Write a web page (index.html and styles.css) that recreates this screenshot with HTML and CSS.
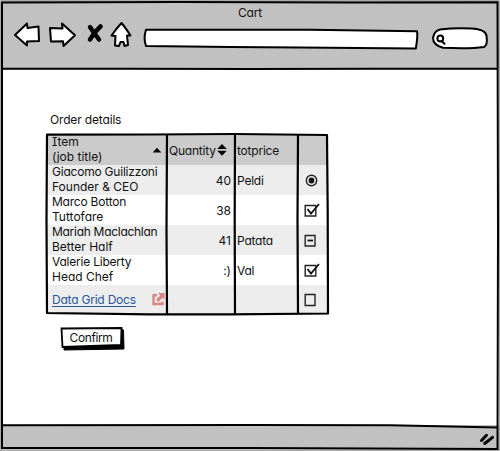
FILE: index.html
```html
<!DOCTYPE html>
<html lang="en">
<head>
<meta charset="utf-8">
<title>Cart</title>
<link rel="stylesheet" href="styles.css">
</head>
<body>
<div class="window">
  <header class="chrome">
    <div class="title">Cart</div>
    <div class="toolbar">
      <svg class="icon" width="30" height="32" viewBox="12 20 30 32"><path d="M15 35L27 23.5L27.5 28L38.5 26.5L39 41L27 41.5L27 45.5Z"/></svg>
      <svg class="icon" width="32" height="32" viewBox="46 20 32 32"><path d="M50 28L62.5 28.5L62 23.5L75 35.2L63.5 46L63 41.2L51 41.5Z"/></svg>
      <svg class="icon" width="20" height="32" viewBox="85 20 20 32"><path class="heavy" d="M90 27Q94 33 99 39.500M100.500 26.500Q94 32 90 39.500"/></svg>
      <svg class="icon" width="28" height="32" viewBox="108 20 28 32"><path d="M121.500 23Q125 27 130.500 35.500L127 35.500L128 45L124.500 46L123.500 42L120.500 42L119 46L115 45.500L115.500 36L111.500 35.500Q116 29 121.500 23Z"/></svg>
      <svg class="icon" width="282" height="32" viewBox="140 20 282 32"><path d="M146 29.800L310 29.800L417 31.300Q418 36 415.800 48.500L300 47.500L230 47L146 46Q143.200 38 146 29.800Z"/></svg>
      <svg class="icon" width="62" height="32" viewBox="430 20 62 32"><path d="M440 29.500Q455 27.500 472 28.500Q486 29.500 486.500 36Q488 45 484 47Q470 49 443 47.800Q433 45 433 38Q434 31 440 29.500Z"/><circle cx="440.300" cy="38.500" r="2.900"/><path d="M441.500 41L444.500 43.800"/></svg>
    </div>
  </header>
  <main class="content">
    <div class="caption">Order details</div>
    <div class="table">
      <div class="row head">
        <div class="item"><span>Item<br>(job title)</span><svg width="8" height="6" viewBox="0 0 8 6"><path d="M-.3 5.500L4 .7L8.300 5.500Z"/></svg></div>
        <div class="sortable"><span class="snug">Quantity</span><svg width="10" height="12" viewBox="0 0 10 12"><path d="M.2 5L5 0L9.800 5ZM.2 6.800L5 11.800L9.800 6.800Z"/></svg></div>
        <div class="snug">totprice</div><div></div>
      </div>
      <div class="row">
        <div class="item"><span><b class="snug">Giacomo Guilizzoni</b><br>Founder &amp; CEO</span></div>
        <div class="num">40</div><div class="snug">Peldi</div>
        <div class="mark"><svg width="18" height="16" viewBox="0 0 18 16"><circle cx="6.500" cy="8.500" r="5.200"/><circle class="dot" cx="6.500" cy="8.500" r="2.900"/></svg></div>
      </div>
      <div class="row">
        <div class="item"><span><b class="snug">Marco Botton</b><br>Tuttofare</span></div>
        <div class="num">38</div><div></div>
        <div class="mark"><svg width="18" height="16" viewBox="0 0 18 16"><path d="M.2 3.500H10.800V14H.2Z"/><path class="tick" d="M2.500 7L6 11.500L14 2"/></svg></div>
      </div>
      <div class="row">
        <div class="item"><span><b class="tight">Mariah Maclachlan</b><br>Better Half</span></div>
        <div class="num">41</div><div class="snug">Patata</div>
        <div class="mark"><svg width="18" height="16" viewBox="0 0 18 16"><path d="M.2 3.500H10V14H.2Z"/><path class="tick" d="M2.500 8.500H8"/></svg></div>
      </div>
      <div class="row">
        <div class="item"><span><b class="snug">Valerie Liberty</b><br>Head Chef</span></div>
        <div class="num">:)</div><div class="snug">Val</div>
        <div class="mark"><svg width="18" height="16" viewBox="0 0 18 16"><path d="M.2 3.500H10.800V14H.2Z"/><path class="tick" d="M2.500 7L6 11.500L14 2"/></svg></div>
      </div>
      <div class="row">
        <div class="item last"><span class="link snug">Data Grid Docs</span><svg class="ext" width="13" height="13" viewBox="0 0 13 13"><path d="M5 2.200H1.500V11H10.500V8.500"/><path class="fill" d="M6 0H12.500V7L10.500 4.700L6.500 9L4 6.500L8.300 2.500Z"/></svg></div>
        <div></div><div></div>
        <div class="mark"><svg width="18" height="16" viewBox="0 0 18 16"><path d="M.2 2.500H10V13.500H.2Z"/></svg></div>
      </div>
      <svg class="rules" width="288" height="186" viewBox="44 132 288 186"><path d="M47 134.700L150 134.500L235 134L327 135L327.700 210L328 313.500L230 314.300L150 314.300L47 313L46.500 220Z"/><path d="M167 135L166.500 230L167 314M235 134L234.700 220L235 314M298 135L297.500 220L298 314"/></svg>
    </div>
    <button class="confirm"><svg class="face" width="68" height="28" viewBox="58 324 68 28"><path class="shade" d="M64 346L121 344L121 329L123.500 330L124 349L64 350Z"/><path class="paper" d="M61.500 328.500L121.500 328L121 345L62.500 347Z"/></svg><span>Confirm</span></button>
  </main>
  <footer class="status"><svg width="20" height="16" viewBox="478 431 20 16"><path d="M481.500 440.500L486.500 435.300M484.700 443.500L492.500 437.300"/></svg></footer>
  <svg class="frame" width="500" height="451" viewBox="0 0 500 451"><path class="edge" d="M0 0H500V2H0ZM0 0V451H1V0ZM0 450V451H500V450ZM499 0V451H500V0Z"/><path d="M2 2.500L180 2L350 2.500L497.500 2.200L498 230L497.500 449L250 448L2 448L2 230ZM2 68.500L250 69L498 68.500M2 425.300L250 425L390 425.300L498 427.500"/></svg>
</div>
</body>
</html>
```
FILE: styles.css
```css
* { box-sizing: border-box; }
body {
  margin: 0;
  font: 12px/15px Inter, "Noto Sans", sans-serif;
  font-feature-settings: "cv11", "cv08";
  color: #111;
  background: #fff;
}
svg { display: block; flex: none; overflow: visible; }
b { font-weight: 400; }
.snug { letter-spacing: -.22px; }
.tight { letter-spacing: -.29px; }
.window { position: relative; width: 500px; height: 451px; display: flex; flex-direction: column; overflow: hidden; }
.chrome { height: 69px; padding-top: 5px; background: #c1c1c1; }
.title { text-align: center; letter-spacing: -.2px; }
.toolbar { display: grid; grid-template-columns: 34px 39px 23px 32px 290px 62px; padding-left: 12px; }
.icon { fill: #fff; stroke: #000; stroke-width: 2; stroke-linejoin: round; stroke-linecap: round; }
.icon .heavy { fill: none; stroke-width: 4.5; }
.content { flex: 1; padding: 43px 0 0 47px; }
.caption { margin: 0 0 8px 3px; letter-spacing: -.16px; }
.table { position: relative; width: 281px; }
.row { display: grid; grid-template: 30px / 120px 68px 63px 30px; background: #fff; }
.row:nth-child(even) { background: #ededed; }
.row.head { background: #cbcbcb; }
.row > div { display: flex; align-items: center; padding-left: 2px; white-space: nowrap; }
.row > .item { justify-content: space-between; padding: 0 6px 0 5px; }
.item span { margin-top: -2px; }
.row > .last { padding-right: 2px; }
.last svg { margin-top: -2px; }
.row > .sortable { gap: 1px; }
.row > .num { justify-content: flex-end; padding-right: 4px; }
.row > .mark { padding-left: 7px; }
.mark svg { fill: none; stroke: #222; stroke-width: 1.4; }
.mark .dot { fill: #111; stroke: none; }
.mark .tick { stroke: #111; stroke-width: 1.8; }
.link { color: #28579b; text-decoration: underline; text-underline-offset: 2px; }
.ext { fill: none; stroke: #db8584; stroke-width: 2.4; }
.ext .fill { fill: #db8584; stroke: none; }
.rules { position: absolute; left: -3px; top: -3px; fill: none; stroke: #000; stroke-width: 2.2; stroke-linejoin: round; }
.confirm { position: relative; display: block; margin: 9px 0 0 11px; padding: 0; width: 68px; height: 28px; border: 0; background: none; color: inherit; font: inherit; font-feature-settings: inherit; letter-spacing: -.4px; }
.confirm span { position: relative; display: block; padding: 0 2px 1px 0; }
.face { position: absolute; inset: 0; }
.shade { fill: #000; stroke: #000; }
.paper { fill: #fff; stroke: #000; stroke-width: 1.8; }
.status { height: 26px; display: flex; justify-content: flex-end; padding: 6px 2px 0; background: #c1c1c1; }
.status svg { fill: none; stroke: #000; stroke-width: 3; stroke-linecap: round; }
.frame { position: absolute; inset: 0; pointer-events: none; fill: none; stroke: #000; stroke-width: 2; }
.frame .edge { fill: #aaa; stroke: none; }
```
